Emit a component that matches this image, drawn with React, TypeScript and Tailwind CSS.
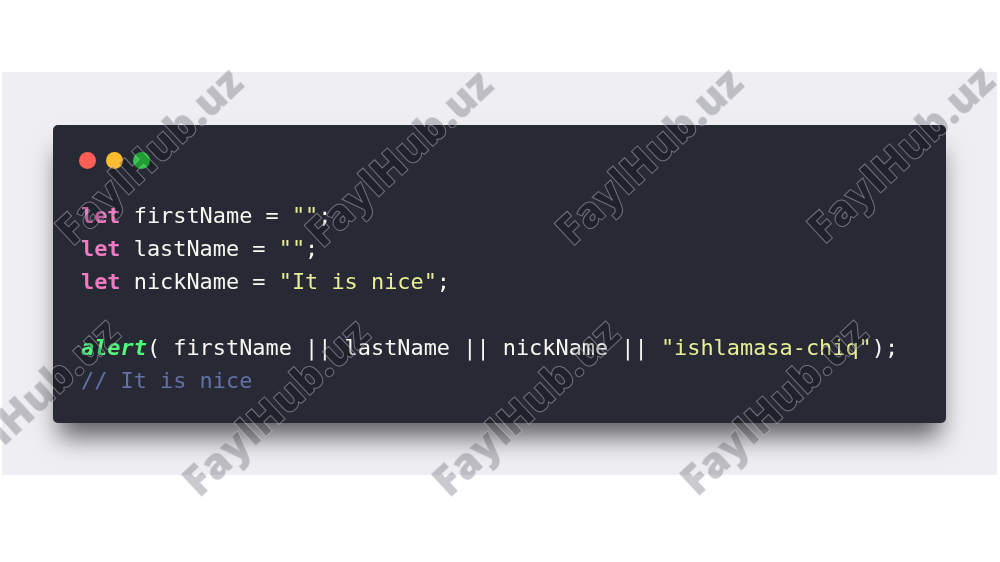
import React from "react";

const K = ({ children }: { children: React.ReactNode }) => (
  <span className="text-[#f27ac0] font-bold">{children}</span>
);
const S = ({ children }: { children: React.ReactNode }) => (
  <span className="text-[#e8ef94]">{children}</span>
);

const marks: { x: number; y: number }[] = [
  { x: 148, y: 155 },
  { x: 398, y: 157 },
  { x: 648, y: 155 },
  { x: 900, y: 153 },
  { x: 25, y: 405 },
  { x: 275, y: 406 },
  { x: 525, y: 406 },
  { x: 773, y: 405 },
];

function Watermark({ x, y }: { x: number; y: number }) {
  return (
    <>
      <div
        className="absolute -translate-x-1/2 -translate-y-1/2 rotate-[-43deg] whitespace-nowrap mix-blend-multiply text-[42px] leading-none font-extrabold text-[#cacace] [font-family:'Open_Sans',sans-serif]"
        style={{ left: x, top: y }}
      >
        FaylHub.uz
      </div>
      <div
        className="absolute -translate-x-1/2 -translate-y-1/2 rotate-[-43deg] whitespace-nowrap text-[42px] leading-none font-extrabold text-transparent [-webkit-text-stroke:1px_rgba(205,205,215,0.45)] [font-family:'Open_Sans',sans-serif]"
        style={{ left: x, top: y }}
      >
        FaylHub.uz
      </div>
    </>
  );
}

export default function App() {
  return (
    <div className="relative w-[1000px] h-[562px] bg-white overflow-hidden">
      <div className="mt-[72px] ml-[2px] mr-[3px] h-[403px] bg-[#efeff3] pt-[53px] pl-[51px] pr-[51px]">
        <div className="h-[298px] rounded-[5px] bg-[#272935] shadow-[0_20px_24px_-6px_rgba(0,0,0,0.6)] pt-[27px] pl-[26px]">
          <div className="flex gap-[10px]">
            <div className="w-[17px] h-[17px] rounded-full bg-[#ff5f56]" />
            <div className="w-[17px] h-[17px] rounded-full bg-[#ffbd2e]" />
            <div className="w-[17px] h-[17px] rounded-full bg-[#27c93f]" />
          </div>
          <div className="mt-[30px] pl-[2px] text-[21.9px] leading-[33px] text-[#f8f8f2] whitespace-pre [font-family:'DejaVu_Sans_Mono','Liberation_Mono',monospace]">
            <div>
              <K>let</K> firstName = <S>""</S>;
            </div>
            <div>
              <K>let</K> lastName = <S>""</S>;
            </div>
            <div>
              <K>let</K> nickName = <S>"It is nice"</S>;
            </div>
            <div>{" "}</div>
            <div>
              <span className="text-[#50fa7b] font-bold italic">alert</span>( firstName || lastName || nickName || <S>"ishlamasa-chiq"</S>);
            </div>
            <div className="text-[#6272a4]">// It is nice</div>
          </div>
        </div>
      </div>
      <div className="pointer-events-none absolute inset-0">
        {marks.map((m, i) => (
          <Watermark key={i} x={m.x} y={m.y} />
        ))}
      </div>
    </div>
  );
}
